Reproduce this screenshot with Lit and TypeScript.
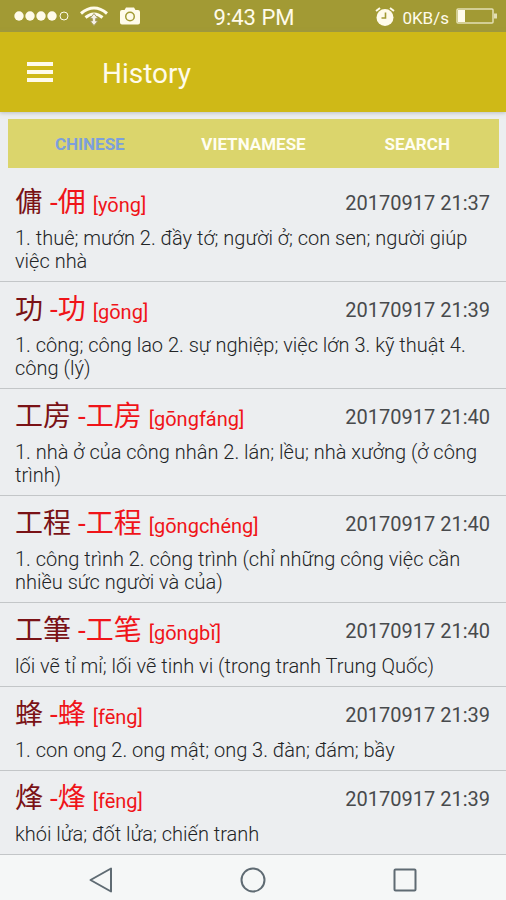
import { LitElement, html, css, svg } from "lit";
import { customElement, property, state } from "lit/decorators.js";
import { classMap } from "lit/directives/class-map.js";

interface Entry {
  traditional: string;
  simplified: string;
  pinyin: string;
  time: string;
  meaning: string;
}

const ENTRIES: Entry[] = [
  { traditional: "傭", simplified: "佣", pinyin: "yōng", time: "20170917 21:37", meaning: "1. thuê; mướn 2. đầy tớ; người ở; con sen; người giúp việc nhà" },
  { traditional: "功", simplified: "功", pinyin: "gōng", time: "20170917 21:39", meaning: "1. công; công lao 2. sự nghiệp; việc lớn 3. kỹ thuật 4. công (lý)" },
  { traditional: "工房", simplified: "工房", pinyin: "gōngfáng", time: "20170917 21:40", meaning: "1. nhà ở của công nhân 2. lán; lều; nhà xưởng (ở công trình)" },
  { traditional: "工程", simplified: "工程", pinyin: "gōngchéng", time: "20170917 21:40", meaning: "1. công trình 2. công trình (chỉ những công việc cần nhiều sức người và của)" },
  { traditional: "工筆", simplified: "工笔", pinyin: "gōngbǐ", time: "20170917 21:40", meaning: "lối vẽ tỉ mỉ; lối vẽ tinh vi (trong tranh Trung Quốc)" },
  { traditional: "蜂", simplified: "蜂", pinyin: "fēng", time: "20170917 21:39", meaning: "1. con ong 2. ong mật; ong 3. đàn; đám; bầy" },
  { traditional: "烽", simplified: "烽", pinyin: "fēng", time: "20170917 21:39", meaning: "khói lửa; đốt lửa; chiến tranh" },
];

@customElement("status-bar")
class StatusBar extends LitElement {
  static styles = css`
    :host {
      display: grid;
      grid-template-columns: 1fr auto 1fr;
      align-items: center;
      height: 32px;
      padding: 0 8px 0 14px;
      background: #a29a34;
      color: #fffbea;
    }
    .side { display: flex; align-items: center; }
    .left { gap: 11px; }
    .right { justify-content: flex-end; gap: 7px; }
    .time { font-size: 22px; line-height: 28px; padding-top: 4px; margin-right: 4px; }
    .speed { font-size: 17px; line-height: 28px; padding-top: 3px; }
    svg { display: block; }
  `;

  render() {
    return html`
      <div class="side left">
        <svg width="55" height="12" viewBox="0 0 55 12" fill="currentColor" aria-hidden="true">
          ${[5, 16, 27, 38].map((x) => svg`<circle cx=${x} cy="6" r="4.7"></circle>`)}
          <circle cx="50" cy="6" r="4" fill="none" stroke="currentColor"></circle>
        </svg>
        <svg width="28" height="20" viewBox="0 0 28 20" fill="none" stroke="currentColor" stroke-width="3" aria-hidden="true">
          <path d="M1 7.500Q14-3.500 27 7.500"></path>
          <path d="M5.500 11.500Q14 4.500 22.500 11.500"></path>
          <path d="M14 7.500l-4 5h2.300v2.500H10l4 4.500 4-4.500h-2.300v-2.500H18z" fill="#f5f0e4" stroke="#a39a62" stroke-width="1"></path>
        </svg>
        <svg width="22" height="18" viewBox="0 0 22 18" aria-hidden="true">
          <path fill="currentColor" d="M7 0.500h8l1.500 2.500H19a2 2 0 0 1 2 2v10.500a2 2 0 0 1-2 2H3a2 2 0 0 1-2-2V5a2 2 0 0 1 2-2h2.500z"></path>
          <circle cx="11" cy="9.500" r="5" fill="#a29a34"></circle>
          <circle cx="11" cy="9.500" r="3.500" fill="currentColor"></circle>
        </svg>
      </div>
      <span class="time">9:43 PM</span>
      <div class="side right">
        <svg width="20" height="19" viewBox="0 0 20 19" fill="none" stroke="currentColor" aria-hidden="true">
          <circle cx="10" cy="10.500" r="8.500" fill="currentColor" stroke="none"></circle>
          <path d="M1 4L5 1M19 4L15 1" stroke-width="2"></path>
          <path d="M10.500 5.500V11H6.500" stroke="#a29a34" stroke-width="1.600"></path>
        </svg>
        <span class="speed">0KB/s</span>
        <svg width="42" height="16" viewBox="0 0 42 16" aria-hidden="true">
          <rect x="1" y="1" width="36" height="14" rx="1" fill="none" stroke="#e3dfb4" stroke-width="1.500"></rect>
          <path d="M38 5.500h3v5h-3z" fill="#e3dfb4"></path>
          <path d="M2 2h7v12h-7z" fill="currentColor"></path>
        </svg>
      </div>
    `;
  }
}

@customElement("history-row")
class HistoryRow extends LitElement {
  @property({ attribute: false }) entry!: Entry;

  static styles = css`
    :host {
      display: block;
      padding: 9px 16px 8px 15px;
      border-bottom: 1px solid #c3c6c8;
    }
    .head {
      display: flex;
      align-items: flex-start;
      justify-content: space-between;
      height: 43px;
      line-height: 38px;
    }
    .word {
      margin: 0;
      font-size: 28px;
      font-weight: 400;
      white-space: pre;
      color: #f01419;
    }
    .traditional { color: #7a1216; }
    .pinyin { font-size: 20px; }
    .time { font-size: 20px; color: #484a4c; }
    .meaning { margin: 0; font-size: 20px; line-height: 23px; font-weight: 300; color: #222426; }
  `;

  render() {
    const e = this.entry;
    return html`
      <div class="head">
        <h2 class="word"><span class="traditional">${e.traditional}</span> -${e.simplified} <span class="pinyin">[${e.pinyin}]</span></h2>
        <time class="time">${e.time}</time>
      </div>
      <p class="meaning">${e.meaning}</p>
    `;
  }
}

@customElement("app-root")
class AppRoot extends LitElement {
  @state() private active = "CHINESE";

  static styles = css`
    :host {
      display: flex;
      flex-direction: column;
      min-height: 100vh;
      background: #eceef0;
      color: #3a3c3e;
      font-family: Roboto, "Noto Sans CJK SC", sans-serif;
    }
    button {
      border: 0;
      padding: 0;
      background: none;
      color: inherit;
      font-family: inherit;
      cursor: pointer;
    }
    svg { display: block; }
    .toolbar {
      display: flex;
      align-items: center;
      gap: 48px;
      height: 80px;
      padding: 0 26px;
      background: #cfb917;
      color: #fffbea;
      box-shadow: 0 1px 4px #8a8f9880;
    }
    .title { margin: 0; padding-top: 4px; font-size: 28px; line-height: 36px; font-weight: 400; }
    .tabs {
      display: grid;
      grid-template-columns: repeat(3, 1fr);
      margin: 7px 7px 7px 8px;
      background: #dbd56c;
    }
    .tab {
      height: 49px;
      font-size: 17px;
      font-weight: 700;
      color: #fffef2;
    }
    .tab.active { color: #7d9fdc; }
    .list { flex: 1; }
    .nav {
      display: grid;
      grid-template-columns: repeat(3, 1fr);
      height: 45px;
      padding: 0 25px;
      background: #f5f7f7;
    }
    .nav-button { display: grid; place-items: center; padding-top: 4px; }
  `;

  render() {
    return html`
      <status-bar></status-bar>
      <header class="toolbar">
        <button aria-label="Menu">
          <svg width="28" height="20" viewBox="0 0 28 20" fill="currentColor">
            <path d="M1 0h26v4H1zM1 8h26v4H1zM1 16h26v4H1z"></path>
          </svg>
        </button>
        <h1 class="title">History</h1>
      </header>
      <div class="tabs" role="tablist">
        ${["CHINESE", "VIETNAMESE", "SEARCH"].map(
          (name) => html`<button
            role="tab"
            class=${classMap({ tab: true, active: name === this.active })}
            aria-selected=${name === this.active}
            @click=${() => (this.active = name)}
          >${name}</button>`
        )}
      </div>
      <main class="list">
        ${ENTRIES.map((entry) => html`<history-row .entry=${entry}></history-row>`)}
      </main>
      <nav class="nav">
        <button class="nav-button" aria-label="Back">
          <svg width="24" height="26" viewBox="0 0 24 26" fill="none" stroke="#5f6b73" stroke-width="2" stroke-linejoin="round">
            <path d="M22 1.500v23L1.500 13z"></path>
          </svg>
        </button>
        <button class="nav-button" aria-label="Home">
          <svg width="26" height="26" viewBox="0 0 26 26" fill="none" stroke="#5f6b73" stroke-width="2">
            <circle cx="13" cy="13" r="11.500"></circle>
          </svg>
        </button>
        <button class="nav-button" aria-label="Recent apps">
          <svg width="24" height="24" viewBox="0 0 24 24" fill="none" stroke="#5f6b73" stroke-width="2">
            <rect x="1.500" y="1.500" width="21" height="21" rx="1"></rect>
          </svg>
        </button>
      </nav>
    `;
  }
}
